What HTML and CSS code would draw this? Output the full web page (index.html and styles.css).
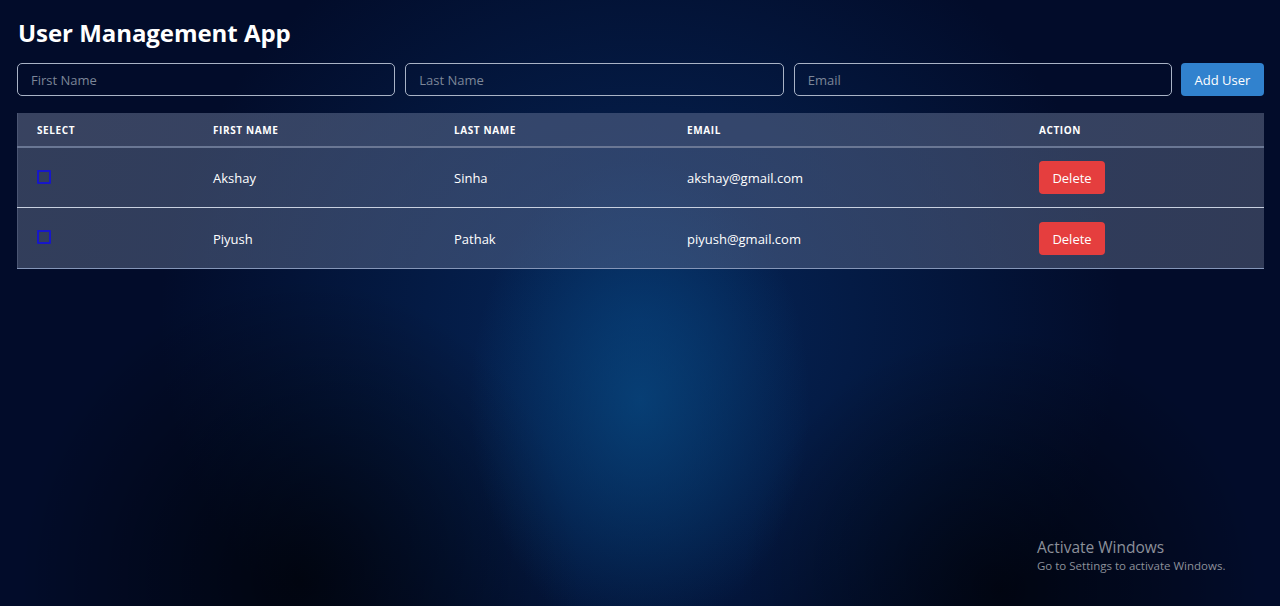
FILE: index.html
```html
<!DOCTYPE html>
<html>
<head>
<meta charset="utf-8">
<link rel="stylesheet" href="styles.css">
</head>
<body>
<div class="app">
  <h1 class="title">User Management App</h1>
  <form class="add-form">
    <input class="field" type="text" placeholder="First Name">
    <input class="field" type="text" placeholder="Last Name">
    <input class="field" type="text" placeholder="Email">
    <button class="btn-add" type="button">Add User</button>
  </form>
  <table class="users">
    <thead>
      <tr>
        <th class="c-select">Select</th>
        <th class="c-first">First Name</th>
        <th class="c-last">Last Name</th>
        <th class="c-email">Email</th>
        <th class="c-action">Action</th>
      </tr>
    </thead>
    <tbody>
      <tr>
        <td class="sel"><span class="check"></span></td>
        <td>Akshay</td>
        <td>Sinha</td>
        <td>akshay@gmail.com</td>
        <td><button class="btn-del" type="button">Delete</button></td>
      </tr>
      <tr>
        <td class="sel"><span class="check"></span></td>
        <td>Piyush</td>
        <td>Pathak</td>
        <td>piyush@gmail.com</td>
        <td><button class="btn-del" type="button">Delete</button></td>
      </tr>
    </tbody>
  </table>
</div>
<div class="watermark">
  <div class="wm-title">Activate Windows</div>
  <div class="wm-sub">Go to Settings to activate Windows.</div>
</div>
</body>
</html>
```
FILE: styles.css
```css
html, body {
  margin: 0;
  height: 100%;
}
body {
  font-family: "Open Sans", "Noto Sans", sans-serif;
  color: #ffffff;
  background-color: #020c2a;
  background-image:
    radial-gradient(ellipse 170px 240px at 640px 400px, rgba(8, 72, 128, 0.75), rgba(8, 72, 128, 0) 100%),
    radial-gradient(ellipse 280px 300px at 300px 580px, rgba(0, 0, 0, 0.65), rgba(0, 0, 0, 0) 100%),
    radial-gradient(ellipse 260px 260px at 1000px 590px, rgba(0, 0, 0, 0.6), rgba(0, 0, 0, 0) 100%),
    radial-gradient(ellipse 480px 440px at 640px 320px, rgba(6, 42, 96, 0.9), rgba(6, 42, 96, 0) 100%);
  overflow: hidden;
  position: relative;
}
.app {
  padding: 16px 16px 0 17px;
}
.title {
  margin: 0 0 0 1px;
  font-size: 24px;
  font-weight: 700;
  line-height: 34px;
  letter-spacing: -0.05px;
}
.add-form {
  display: flex;
  gap: 10px;
  margin-top: 13px;
}
.field {
  flex: 1;
  height: 33px;
  box-sizing: border-box;
  background: transparent;
  border: 1px solid #a9b3c6;
  border-radius: 5px;
  padding: 0 13px;
  color: #fff;
  font-family: inherit;
  font-size: 13px;
  outline: none;
}
.field::placeholder {
  color: #7c8698;
}
.btn-add {
  width: 83px;
  flex: none;
  height: 33px;
  margin-left: -1px;
  border: none;
  border-radius: 4px;
  background: #3182ce;
  color: #fff;
  font-family: inherit;
  font-size: 13px;
  font-weight: 500;
}
.users {
  width: 100%;
  margin-top: 17px;
  border-collapse: collapse;
  background: linear-gradient(100deg, rgba(80, 92, 120, 0.62), rgba(70, 90, 130, 0.62) 50%, rgba(78, 88, 115, 0.62));
  border-bottom: 1px solid #8596b8;
  box-shadow: inset 1px 0 0 #4a5572;
}
.users th {
  height: 33px;
  padding: 0 20px;
  text-align: left;
  font-size: 10px;
  font-weight: 700;
  letter-spacing: 0.6px;
  text-transform: uppercase;
  border-bottom: 2px solid #6a7794;
  background: rgba(80, 90, 120, 0.2);
}
.c-select { width: 136px; }
.c-first { width: 201px; }
.c-last { width: 193px; }
.c-email { width: 312px; }
.users td {
  height: 59px;
  padding: 0 20px;
  font-size: 13px;
  vertical-align: middle;
}
.users tbody tr + tr td {
  border-top: 1px solid #c8d0e0;
  padding-top: 1px;
}
.users td.sel {
  vertical-align: top;
  padding-top: 22px;
  box-sizing: border-box;
}
.check {
  display: block;
  width: 10px;
  height: 10px;
  border: 2px solid #1717c8;
  border-radius: 1px;
}
.btn-del {
  width: 66px;
  height: 33px;
  border: none;
  border-radius: 4px;
  background: #e53e3e;
  color: #fff;
  font-family: inherit;
  font-size: 13px;
  font-weight: 500;
}
.watermark {
  position: absolute;
  left: 1037px;
  top: 537px;
  color: #8c909a;
  font-family: "Open Sans", sans-serif;
}
.wm-title {
  font-size: 15.5px;
  line-height: 20px;
}
.wm-sub {
  font-size: 11.5px;
  line-height: 18px;
}
```
